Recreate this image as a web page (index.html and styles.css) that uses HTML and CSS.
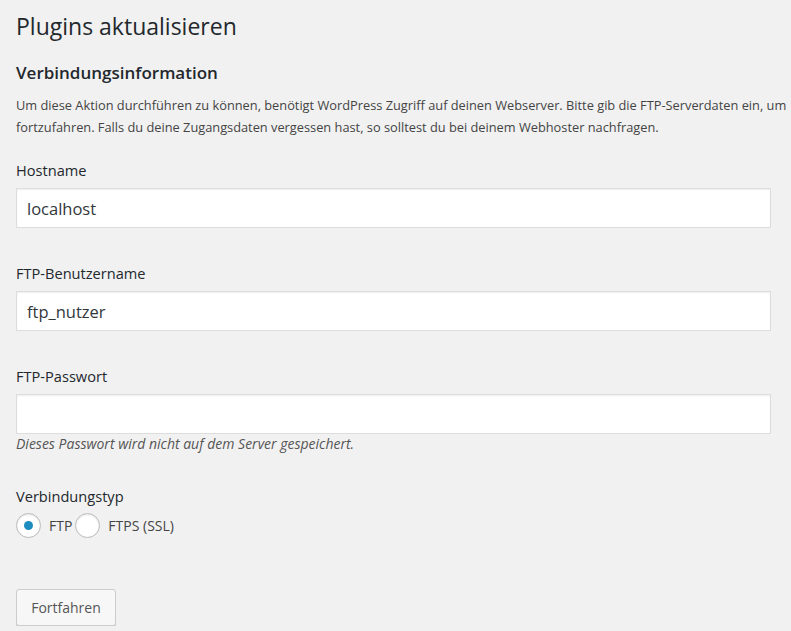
FILE: index.html
```html
<!DOCTYPE html>
<html>
<head>
<meta charset="utf-8">
<link rel="stylesheet" href="styles.css">
</head>
<body>
<div class="wrap">
  <h1 class="title">Plugins aktualisieren</h1>
  <h2 class="subtitle">Verbindungsinformation</h2>
  <p class="intro">Um diese Aktion durchführen zu können, benötigt WordPress Zugriff auf deinen Webserver. Bitte gib die FTP-Serverdaten ein, um fortzufahren. Falls du deine Zugangsdaten vergessen hast, so solltest du bei deinem Webhoster nachfragen.</p>
  <div class="field">
    <label class="label" for="host">Hostname</label>
    <input class="input" id="host" type="text" value="localhost">
  </div>
  <div class="field">
    <label class="label" for="user">FTP-Benutzername</label>
    <input class="input" id="user" type="text" value="ftp_nutzer">
  </div>
  <div class="field field-pass">
    <label class="label" for="pass">FTP-Passwort</label>
    <input class="input" id="pass" type="password" value="">
    <em class="note">Dieses Passwort wird nicht auf dem Server gespeichert.</em>
  </div>
  <fieldset class="conn">
    <legend class="label">Verbindungstyp</legend>
    <div class="radios">
      <label class="radio"><span class="circle checked"></span>FTP</label>
      <label class="radio"><span class="circle"></span>FTPS (SSL)</label>
    </div>
  </fieldset>
  <button class="btn" type="button">Fortfahren</button>
</div>
</body>
</html>
```
FILE: styles.css
```css
html, body {
  margin: 0;
  padding: 0;
  background: #f1f1f1;
}
body {
  font-family: "Open Sans", sans-serif;
  color: #23282d;
}
.wrap {
  padding: 0 0 0 16px;
}
.title {
  font-size: 23px;
  font-weight: 400;
  line-height: 29px;
  margin: 0;
  padding: 12px 0 0;
}
.subtitle {
  font-size: 17px;
  font-weight: 600;
  line-height: 22px;
  margin: 0;
  padding-top: 21px;
}
.intro {
  font-size: 12.8px;
  line-height: 22px;
  color: #444;
  margin: 0;
  padding-top: 10px;
}
.field {
  padding-top: 22px;
  display: flex;
  flex-direction: column;
}
.field + .field {
  padding-top: 35px;
}
.label {
  font-size: 14.6px;
  line-height: 20px;
  color: #23282d;
  display: block;
  padding: 0;
}
.input {
  margin-top: 8px;
  margin-right: 20px;
  height: 40px;
  box-sizing: border-box;
  border: 1px solid #ddd;
  box-shadow: inset 0 1px 2px rgba(0,0,0,0.07);
  background: #fff;
  font-family: "Open Sans", sans-serif;
  font-size: 16.5px;
  color: #32373c;
  padding: 0 10px;
  outline: none;
}
.note {
  font-size: 14px;
  color: #555;
  line-height: 18px;
  margin-top: 1px;
}
.conn {
  border: 0;
  margin: 0;
  padding: 0;
  padding-top: 33px;
}
.conn legend {
  float: left;
  width: 100%;
}
.radios {
  clear: both;
  display: flex;
  align-items: center;
  padding-top: 7px;
}
.radio {
  display: flex;
  align-items: center;
  font-size: 14px;
  color: #444;
}
.circle {
  width: 23px;
  height: 23px;
  border: 1px solid #bbb;
  border-radius: 50%;
  background: #fff;
  box-shadow: inset 0 1px 2px rgba(0,0,0,0.1);
  margin-right: 8px;
  display: flex;
  align-items: center;
  justify-content: center;
}
.circle.checked::after {
  content: "";
  width: 9px;
  height: 9px;
  border-radius: 50%;
  background: #1e8cbe;
}
.radio + .radio .circle {
  margin-left: 3px;
}
.btn {
  display: block;
  margin-top: 51px;
  height: 37px;
  width: 100px;
  background: #f7f7f7;
  border: 1px solid #ccc;
  border-radius: 3px;
  box-shadow: 0 1px 0 #ccc;
  font-family: "Open Sans", sans-serif;
  font-size: 14px;
  color: #555;
  padding: 0 12px;
}
```
